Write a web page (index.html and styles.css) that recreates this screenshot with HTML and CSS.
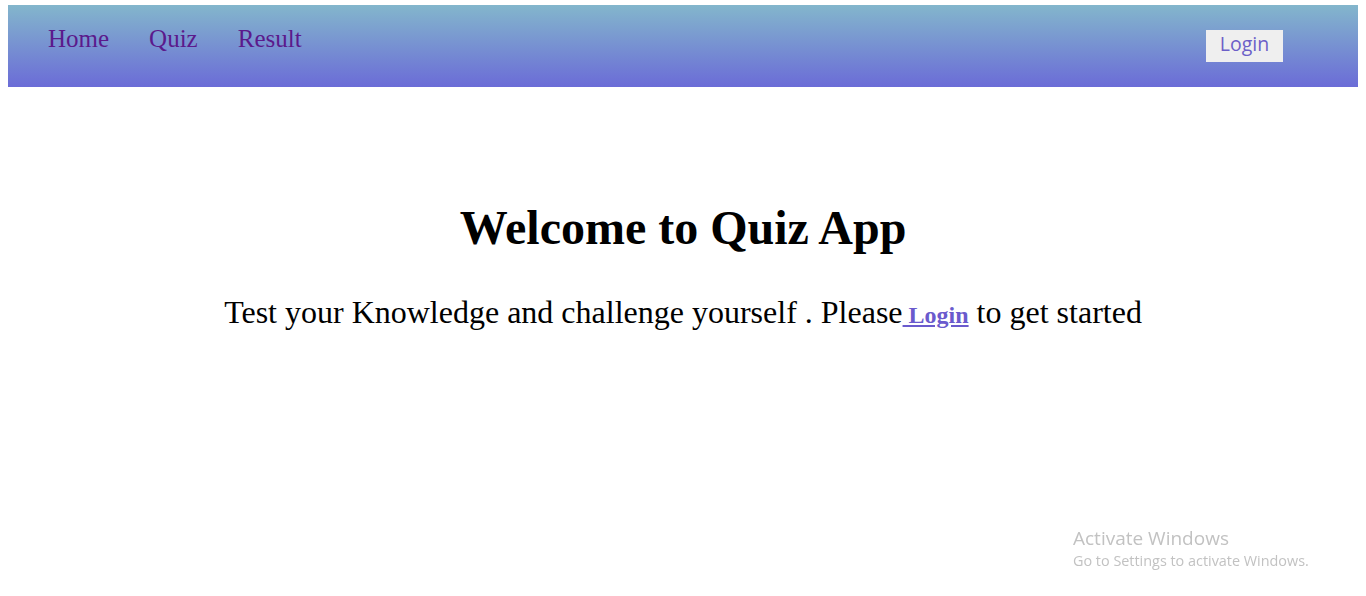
FILE: index.html
```html
<!DOCTYPE html>
<html lang="en">
<head>
<meta charset="utf-8">
<title>Quiz App</title>
<link rel="stylesheet" href="styles.css">
</head>
<body>
<nav class="navbar">
  <ul class="nav-links">
    <li><a href="#" class="nav-link">Home</a></li>
    <li><a href="#" class="nav-link">Quiz</a></li>
    <li><a href="#" class="nav-link">Result</a></li>
  </ul>
  <button class="login-btn">Login</button>
</nav>
<main class="hero">
  <h1 class="hero-title">Welcome to Quiz App</h1>
  <p class="hero-text">Test your Knowledge and challenge yourself . Please<a href="#" class="hero-link"> Login</a> to get started</p>
</main>
<div class="watermark">
  <div class="wm-title">Activate Windows</div>
  <div class="wm-sub">Go to Settings to activate Windows.</div>
</div>
</body>
</html>
```

FILE: styles.css
```css
html, body {
  height: 100%;
}
body {
  margin: 5px 8px 0;
  font-family: "Liberation Serif", "Times New Roman", serif;
  background: #ffffff;
  color: #000;
}
.navbar {
  height: 82px;
  display: flex;
  justify-content: space-between;
  align-items: flex-start;
  background: linear-gradient(to bottom, #83b6cc, #6b6cd7);
  padding: 0 75px 0 40px;
  box-sizing: border-box;
}
.nav-links {
  list-style: none;
  display: flex;
  gap: 40px;
  margin: 0;
  padding: 20px 0 0;
}
.nav-link {
  font-size: 25px;
  color: #5b1a8c;
  text-decoration: none;
}
.login-btn {
  margin-top: 25px;
  width: 77px;
  height: 32px;
  border: none;
  background: #efefef;
  color: #6c5fc8;
  font-family: "Open Sans", "Segoe UI", sans-serif;
  font-size: 19.5px;
  line-height: 28px;
  padding: 0 0 4px;
  cursor: pointer;
}
.hero {
  text-align: center;
  padding-top: 113px;
}
.hero-title {
  font-size: 48px;
  font-weight: bold;
  margin: 0 0 39px;
  line-height: 55px;
}
.hero-text {
  font-size: 32px;
  margin: 0;
}
.hero-link {
  font-size: 24px;
  font-weight: bold;
  color: #6a5acd;
  text-decoration: underline;
}
.watermark {
  position: fixed;
  left: 1073px;
  top: 526px;
  font-family: "Open Sans", "Segoe UI", sans-serif;
  color: #c2c2c2;
}
.wm-title {
  font-size: 19px;
  line-height: 24px;
}
.wm-sub {
  font-size: 14.4px;
  line-height: 22px;
}
```
